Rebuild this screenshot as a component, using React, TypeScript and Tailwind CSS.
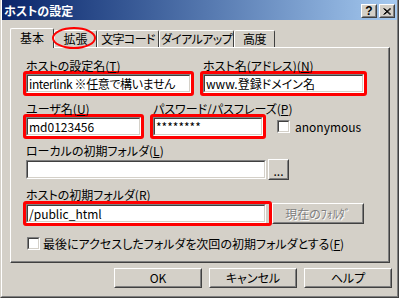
import React from 'react';

const font = "font-['Noto_Sans_CJK_JP','Liberation_Sans',sans-serif] [font-feature-settings:'palt']";

function Field({width, value, tight}: {width: string; value?: string; tight?: boolean}) {
  return (
    <div className={`${width} h-[19px] border border-t-[#808080] border-l-[#808080] border-r-white border-b-white`}>
      <div className="h-full border border-t-[#404040] border-l-[#404040] border-r-[#d4d0c8] border-b-[#d4d0c8] bg-white flex items-center pl-[1px] overflow-hidden">
        <span className={`text-[12px] leading-none text-black whitespace-nowrap ${tight ? 'tracking-[-0.4px]' : ''}`}>{value}</span>
      </div>
    </div>
  );
}

function Marked({children, extra}: {children: React.ReactNode; extra?: boolean}) {
  return (
    <div
      className={`-my-[3px] -ml-[3px] border-[3px] border-[#ff0000] rounded-[3px] ${
        extra ? '-mr-[6px] pr-[3px]' : '-mr-[3px]'
      }`}
    >
      {children}
    </div>
  );
}

function Button({width, height, children, disabled}: {width: string; height: string; children: React.ReactNode; disabled?: boolean}) {
  return (
    <div className={`${width} ${height} border border-t-white border-l-white border-r-[#404040] border-b-[#404040]`}>
      <div
        className={`h-full border border-t-[#d4d0c8] border-l-[#d4d0c8] border-r-[#808080] border-b-[#808080] flex items-center justify-center text-[12px] leading-none whitespace-nowrap ${
          disabled ? 'text-[#808080] [text-shadow:1px_1px_0_#fff]' : 'text-black'
        }`}
      >
        {children}
      </div>
    </div>
  );
}

function Check() {
  return (
    <div className="w-[13px] h-[13px] shrink-0 border border-t-[#808080] border-l-[#808080] border-r-white border-b-white">
      <div className="h-full border border-t-[#404040] border-l-[#404040] border-r-[#d4d0c8] border-b-[#d4d0c8] bg-white" />
    </div>
  );
}

function Label({children}: {children: React.ReactNode}) {
  return <div className="h-[15px] text-[12px] leading-[14px] text-black whitespace-nowrap">{children}</div>;
}

function TitleButton({children}: {children: React.ReactNode}) {
  return (
    <div className="w-[16px] h-[14px] border border-t-white border-l-white border-r-[#404040] border-b-[#404040]">
      <div className="h-full border border-t-[#d4d0c8] border-l-[#d4d0c8] border-r-[#808080] border-b-[#808080] bg-[#d4d0c8] flex items-center justify-center">
        {children}
      </div>
    </div>
  );
}

const tabs = [
  {name: '文字コード', w: 'w-[62px]'},
  {name: 'ダイアルアップ', w: 'w-[75px]'},
  {name: '高度', w: 'w-[41px]'},
];

export default function App() {
  return (
    <div className={`w-[399px] h-[298px] bg-[#d4d0c8] ${font} border-l border-l-[#d4d0c8] border-r border-r-[#404040] border-b border-b-[#404040]`}>
      <div className="h-full flex flex-col border-l border-l-white border-r border-r-[#808080] border-b border-b-[#808080]">
        {/* title bar */}
        <div className="h-[20px] shrink-0 flex items-center pt-[2px] pl-[2px] pr-[2px] bg-gradient-to-r from-[#0a246a] to-[#a6caf0]">
          <span className="text-[12px] font-bold text-white leading-none">ホストの設定</span>
          <div className="ml-auto flex gap-[2px]">
            <TitleButton>
              <span className="font-['Liberation_Sans',sans-serif] text-[12px] font-bold leading-none text-black">?</span>
            </TitleButton>
            <TitleButton>
              <svg width="8" height="7" viewBox="0 0 8 7">
                <path d="M0.5 0.5 L7 6.5 M1.5 0.5 L8 6.5 M7 0.5 L0.5 6.5 M8 0.5 L1.5 6.5" stroke="#000" strokeWidth="1" />
              </svg>
            </TitleButton>
          </div>
        </div>

        {/* tabs */}
        <div className="relative ml-[8px] mt-[8px] h-[19px] flex items-end">
          <div className="relative z-10 w-[44px] h-[20px] -mb-px bg-[#d4d0c8] border-t border-l border-white border-r border-r-[#404040] rounded-t-[2px] flex items-center justify-center text-[12px] leading-none pb-[1px]">
            基本
          </div>
          <div className="w-[43px] h-[17px] border-t border-l border-white border-r border-r-[#404040] rounded-t-[2px] flex items-center justify-center text-[12px] leading-none">
            拡張
          </div>
          {tabs.map((t) => (
            <div
              key={t.name}
              className={`${t.w} h-[17px] border-t border-l border-white border-r border-r-[#404040] rounded-t-[2px] flex items-center justify-center text-[12px] leading-none whitespace-nowrap tracking-[-0.6px]`}
            >
              {t.name}
            </div>
          ))}
          <div className="absolute left-[42px] -top-[1px] w-[44px] h-[22px] rounded-[50%] border-2 border-[#ff0000] pointer-events-none z-20" />
        </div>

        {/* panel */}
        <div className="ml-[8px] w-[380px] h-[216px] border-t border-l border-white border-r border-b border-r-[#404040] border-b-[#404040]">
          <div className="h-full border-r border-b border-[#808080] pl-[15px] pt-[11px] flex flex-col">
            <div className="flex">
              <div className="w-[165px]">
                <Label>
                  ホストの設定名(<u>T</u>)
                </Label>
                <Marked>
                  <Field width="w-[165px]" value="interlink ※任意で構いません" tight />
                </Marked>
              </div>
              <div className="ml-[12px] w-[161px]">
                <Label>
                  ホスト名(アドレス)(<u>N</u>)
                </Label>
                <Marked>
                  <Field width="w-[161px]" value="www.登録ドメイン名" />
                </Marked>
              </div>
            </div>

            <div className="flex mt-[9px]">
              <div className="w-[115px]">
                <Label>
                  ユーザ名(<u>U</u>)
                </Label>
                <Marked>
                  <Field width="w-[115px]" value="md0123456" />
                </Marked>
              </div>
              <div className="ml-[12px]">
                <Label>
                  パスワード/パスフレーズ(<u>P</u>)
                </Label>
                <div className="flex items-center">
                  <Marked>
                    <Field width="w-[110px]" value="********" />
                  </Marked>
                  <div className="ml-[14px]">
                    <Check />
                  </div>
                  <span className="ml-[5px] text-[12px] leading-none">anonymous</span>
                </div>
              </div>
            </div>

            <div className="mt-[8px]">
              <Label>
                ローカルの初期フォルダ(<u>L</u>)
              </Label>
              <div className="flex items-center">
                <Field width="w-[240px]" />
                <div className="ml-[2px]">
                  <Button width="w-[21px]" height="h-[21px]">
                    <span className="mt-[2px]">...</span>
                  </Button>
                </div>
              </div>
            </div>

            <div className="mt-[8px]">
              <Label>
                ホストの初期フォルダ(<u>R</u>)
              </Label>
              <div className="flex items-center">
                <Marked extra>
                  <Field width="w-[240px]" value="/public_html" />
                </Marked>
                <div className="ml-[6px]">
                  <Button width="w-[92px]" height="h-[21px]" disabled>
                    現在のﾌｫﾙﾀﾞ
                  </Button>
                </div>
              </div>
            </div>

            <div className="mt-[13px] ml-[1px] flex items-center">
              <Check />
              <span className="ml-[3px] text-[12px] leading-none whitespace-nowrap">
                最後にアクセスしたフォルダを次回の初期フォルダとする(<u>F</u>)
              </span>
            </div>
          </div>
        </div>

        {/* buttons */}
        <div className="mt-[5px] flex justify-end gap-[7px] pr-[5px]">
          <Button width="w-[88px]" height="h-[20px]">OK</Button>
          <Button width="w-[88px]" height="h-[20px]">キャンセル</Button>
          <Button width="w-[88px]" height="h-[20px]">ヘルプ</Button>
        </div>
      </div>
    </div>
  );
}
